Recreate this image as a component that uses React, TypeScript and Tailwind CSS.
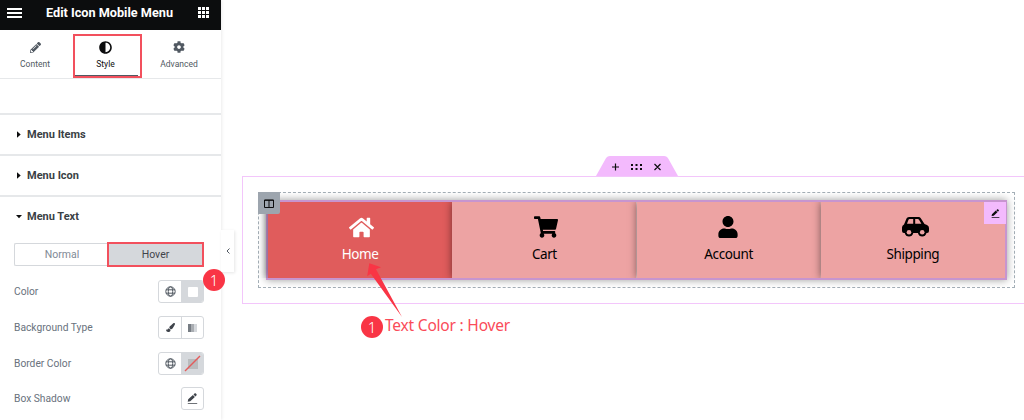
import { ReactNode } from 'react';
import { FaAdjust, FaCog, FaHome, FaPaintBrush, FaPencilAlt, FaShoppingCart, FaUser } from 'react-icons/fa';

const menuItems = [
  { label: 'Home', icon: <FaHome size={25} className="ml-[3px]" /> },
  { label: 'Cart', icon: <FaShoppingCart size={24} className="ml-[3px]" /> },
  { label: 'Account', icon: <FaUser size={22} className="-ml-px" /> },
  { label: 'Shipping', icon: <CarIcon /> },
];

function CarIcon() {
  return (
    <svg width="27" height="20" viewBox="0 0 27 20" fill="currentColor" className="ml-[5px]">
      <path
        fillRule="evenodd"
        d="M7 0h9.500q1.500 0 2.300 1.200L22.500 7 25 8q2 .8 2 3V14q0 2-2 2H2q-2 0-2-2V10.500Q0 8.500 2 7.500L4.500 1.500Q5.100 0 7 0zM7.600 2q-.8 0-1.100.8L5 6.800h6.200V2zM13.200 2V6.800h6.200L17 2.800q-.4-.8-1.200-.8z"
      />
      <circle cx="7" cy="15.200" r="4.300" />
      <circle cx="20.200" cy="15.200" r="4.300" />
      <circle cx="7" cy="15.200" r="2.300" fill="#eda3a3" />
      <circle cx="20.200" cy="15.200" r="2.300" fill="#eda3a3" />
    </svg>
  );
}

function GlobeIcon() {
  return (
    <svg width="11" height="11" viewBox="0 0 11 11" fill="none" stroke="#515962" strokeWidth="1">
      <circle cx="5.500" cy="5.500" r="4.700" />
      <ellipse cx="5.500" cy="5.500" rx="2.200" ry="4.700" />
      <path d="M1 3.800h9M1 7.200h9" />
    </svg>
  );
}

function EditIcon({ size = 11 }: { size?: number }) {
  return (
    <svg width={size} height={size} viewBox="0 0 11 11" fill="currentColor">
      <path d="M1.200 6.300 5.900 1.900 7.900 3.900 3.300 8.200.7 8.700zM6.500 1.400 7.500.5c.4-.4.9-.4 1.300 0l.6.6c.4.4.4.9 0 1.300l-1 1z" />
      <path d="M.8 9.900h9.400v.9H.8z" />
    </svg>
  );
}

function Tab({ icon, label, active }: { icon: ReactNode; label: string; active?: boolean }) {
  return (
    <div className={`flex h-full flex-col items-center pt-[11px] text-[8.500px] leading-[10px] ${active ? 'text-[#0c0d0e]' : 'text-[#515962]'}`}>
      <div className="mb-[6px] flex h-3 items-center">{icon}</div>
      {label}
    </div>
  );
}

function Section({ title, open }: { title: string; open?: boolean }) {
  return (
    <div className={`flex items-center pl-4 text-[11px] font-bold text-[#3a3f45] ${open ? 'h-10 pt-px' : 'h-[41px] border-b-2 border-[#e6e8ea] pt-[2px]'}`}>
      <svg width="6" height="7" viewBox="0 0 6 7" className="mr-[5px] -mt-[2px] fill-[#0c0d0e]">
        <path d={open ? 'M0 2h6L3 5.300z' : 'M1 .3v6.400l3.700-3.200z'} />
      </svg>
      {title}
    </div>
  );
}

function Control({ label, children }: { label: string; children: ReactNode }) {
  return (
    <div className="flex h-[35.700px] items-center justify-between pr-[17px] pl-[14px] text-[10.250px] text-[#69727d]">
      {label}
      <div className="flex h-[23px] overflow-hidden rounded-[3px] border border-[#d5d8dc] text-[#3f444b]">{children}</div>
    </div>
  );
}

function Cell({ children, dark, split }: { children: ReactNode; dark?: boolean; split?: boolean }) {
  return (
    <div className={`flex h-full items-center justify-center ${split ? 'w-[23px] border-r border-[#d5d8dc]' : 'w-[21px]'} ${dark ? 'bg-[#d5d8dc]' : ''}`}>
      {children}
    </div>
  );
}

function Sidebar() {
  return (
    <aside className="relative h-full w-[221px] shrink-0 bg-white shadow-[1px_0_3px_rgba(0,0,0,0.08)]">
      <header className="flex h-[30px] items-center bg-[#0c0d0e] pb-[4px] pl-[7px] text-white">
        <svg width="15" height="10" viewBox="0 0 15 10" fill="currentColor">
          <path d="M0 0h15v2H0zM0 4h15v2H0zM0 8h15v2H0z" />
        </svg>
        <span className="ml-[24px] w-[129px] text-[12.700px] leading-4 font-bold whitespace-nowrap">Edit Icon Mobile Menu</span>
        <svg width="11" height="11" viewBox="0 0 11 11" fill="currentColor" className="-mt-px ml-[23px]">
          <path d="M0 0h3v3H0zM4 0h3v3H4zM8 0h3v3H8zM0 4h3v3H0zM4 4h3v3H4zM8 4h3v3H8zM0 8h3v3H0zM4 8h3v3H4zM8 8h3v3H8z" />
        </svg>
      </header>

      {/* Tabs */}
      <div className="grid h-[49px] grid-cols-[70px_71px_76px] border-b border-[#e6e8ea]">
        <Tab icon={<FaPencilAlt size={11} />} label="Content" />
        <div className="relative">
          <Tab icon={<FaAdjust size={13} />} label="Style" active />
          <div className="absolute top-1 left-[3px] h-[44px] w-[69px] border-2 border-[#f2505d]">
            <div className="absolute bottom-0 left-0 h-px w-[63px] bg-[#515962]" />
          </div>
        </div>
        <Tab icon={<FaCog size={12} />} label="Advanced" />
      </div>
      <div className="h-9 border-b-2 border-[#e6e8ea]" />

      <Section title="Menu Items" />
      <Section title="Menu Icon" />
      <Section title="Menu Text" open />

      <div className="mt-[5px] mb-[7px] ml-[14px] flex h-[25px] w-[190px] text-[10.500px]">
        <div className="my-px flex w-[93px] items-center justify-center rounded-l-[2px] border border-r-0 border-[#d5d8dc] pl-[2px] text-[#818a96]">Normal</div>
        <div className="flex w-[97px] items-center justify-center border-2 border-[#f2505d] bg-[#d5d8dc] text-[#3f444b]">Hover</div>
      </div>

      {/* Style controls */}
      <Control label="Color">
        <Cell split><GlobeIcon /></Cell>
        <Cell dark><div className="size-[10px] rounded-[1px] bg-white" /></Cell>
      </Control>
      <Control label="Background Type">
        <Cell split><FaPaintBrush size={9} /></Cell>
        <Cell>
          <div className="flex h-[8px] w-[9px]">
            <div className="w-[3px] bg-[#777d84]" />
            <div className="w-[3px] bg-[#a9adb2]" />
            <div className="w-[3px] bg-[#d5d8dc]" />
          </div>
        </Cell>
      </Control>
      <Control label="Border Color">
        <Cell split><GlobeIcon /></Cell>
        <Cell dark>
          <svg width="17" height="17" viewBox="0 0 17 17">
            <path d="M4 4h10v10H4z" fill="#b9bbbd" />
            <path d="M1 16 16 1" stroke="#e45b5b" strokeWidth="1.500" />
          </svg>
        </Cell>
      </Control>
      <Control label="Box Shadow">
        <Cell><EditIcon /></Cell>
      </Control>

      <Badge className="top-[269px] left-[203px]" />
      <div className="absolute top-[230px] left-[221px] flex h-[42px] w-[13px] items-center justify-center bg-white shadow-[1px_1px_3px_rgba(0,0,0,0.1)]">
        <svg width="4" height="6" viewBox="0 0 4 6" fill="none" stroke="#515962">
          <path d="M3.500.5 1 3l2.500 2.500" />
        </svg>
      </div>
    </aside>
  );
}

function Badge({ className }: { className: string }) {
  return (
    <div className={`absolute z-10 flex size-[22px] items-center justify-center rounded-full bg-[#f93545] font-['Noto_Sans'] text-[15px] leading-none font-light text-white ${className}`}>1</div>
  );
}

function Preview() {
  return (
    <main className="relative flex-1 pt-[176px] pl-[21px]">
      <div className="relative h-[128px] w-[800px] border border-[#f3c6fb] p-[15px]">
        {/* Section handle */}
        <svg width="82" height="20" viewBox="0 0 82 20" className="absolute -top-[21px] left-[353px]">
          <path d="M0 20 9.500 3Q11 0 14 0H68Q71 0 72.500 3L82 20z" fill="#f3bafd" />
          <path d="M16 11h7M19.500 7.500v7M58.500 8l6 6M64.500 8l-6 6" stroke="#0c0d0e" strokeWidth="1.200" />
          <path d="M35 8h2v2h-2zM39.500 8h2v2h-2zM44 8h2v2h-2zM35 12h2v2h-2zM39.500 12h2v2h-2zM44 12h2v2h-2z" fill="#0c0d0e" />
        </svg>

        <div className="relative h-[96px] w-[757px] border border-dashed border-[#a4afb7] p-[7px]">
          <div className="relative flex h-[80px] w-[741px] border-2 border-[#c795cf] shadow-[0_0_8px_rgba(0,0,0,0.4)]">
            {menuItems.map(({ label, icon }, i) => (
              <div
                key={label}
                className={`relative flex flex-1 flex-col items-center pt-[13px] font-['Noto_Sans'] text-[13.500px] leading-5 tracking-[-0.4px] shadow-[0_0_8px_rgba(0,0,0,0.5)] [clip-path:inset(0_0_0_-10px)] ${
                  i === 0 ? 'bg-[#e05c5c] text-white' : 'bg-[#eda3a3] text-black'
                }`}
              >
                <div className="mb-[5px] flex h-6 items-center">{icon}</div>
                {label}
              </div>
            ))}
            <div className="absolute top-0 -right-px flex size-[22px] items-center justify-center bg-[#f3bafd] text-[#0c0d0e]">
              <EditIcon size={9} />
            </div>
          </div>
          <div className="absolute -top-px -left-px flex size-[22px] items-center justify-center rounded-br-[2px] bg-[#9da5ae]">
            <svg width="10" height="9" viewBox="0 0 10 9" fill="none" stroke="#0c0d0e">
              <path d="M.5 1h9v7.500h-9zM5 1v7.500M.5 1.300h9" />
            </svg>
          </div>
        </div>
      </div>

      {/* Callout */}
      <svg width="36" height="56" viewBox="0 0 36 56" className="absolute top-[263px] left-[146px]" fill="#f93545">
        <path d="M2.300.3 14 4.300 9 6.200 35 54 3.800 10.700.2 13.200z" />
      </svg>
      <Badge className="top-[316px] left-[140px]" />
      <div className="absolute top-[314px] left-[164px] font-['Noto_Sans'] text-[15.500px] leading-[22px] tracking-[-0.2px] whitespace-nowrap text-[#fa4b59]">Text Color : Hover</div>
    </main>
  );
}

export default function App() {
  return (
    <div className="flex h-[420px] w-[1024px] overflow-hidden bg-white font-[Roboto,sans-serif]">
      <Sidebar />
      <Preview />
    </div>
  );
}
